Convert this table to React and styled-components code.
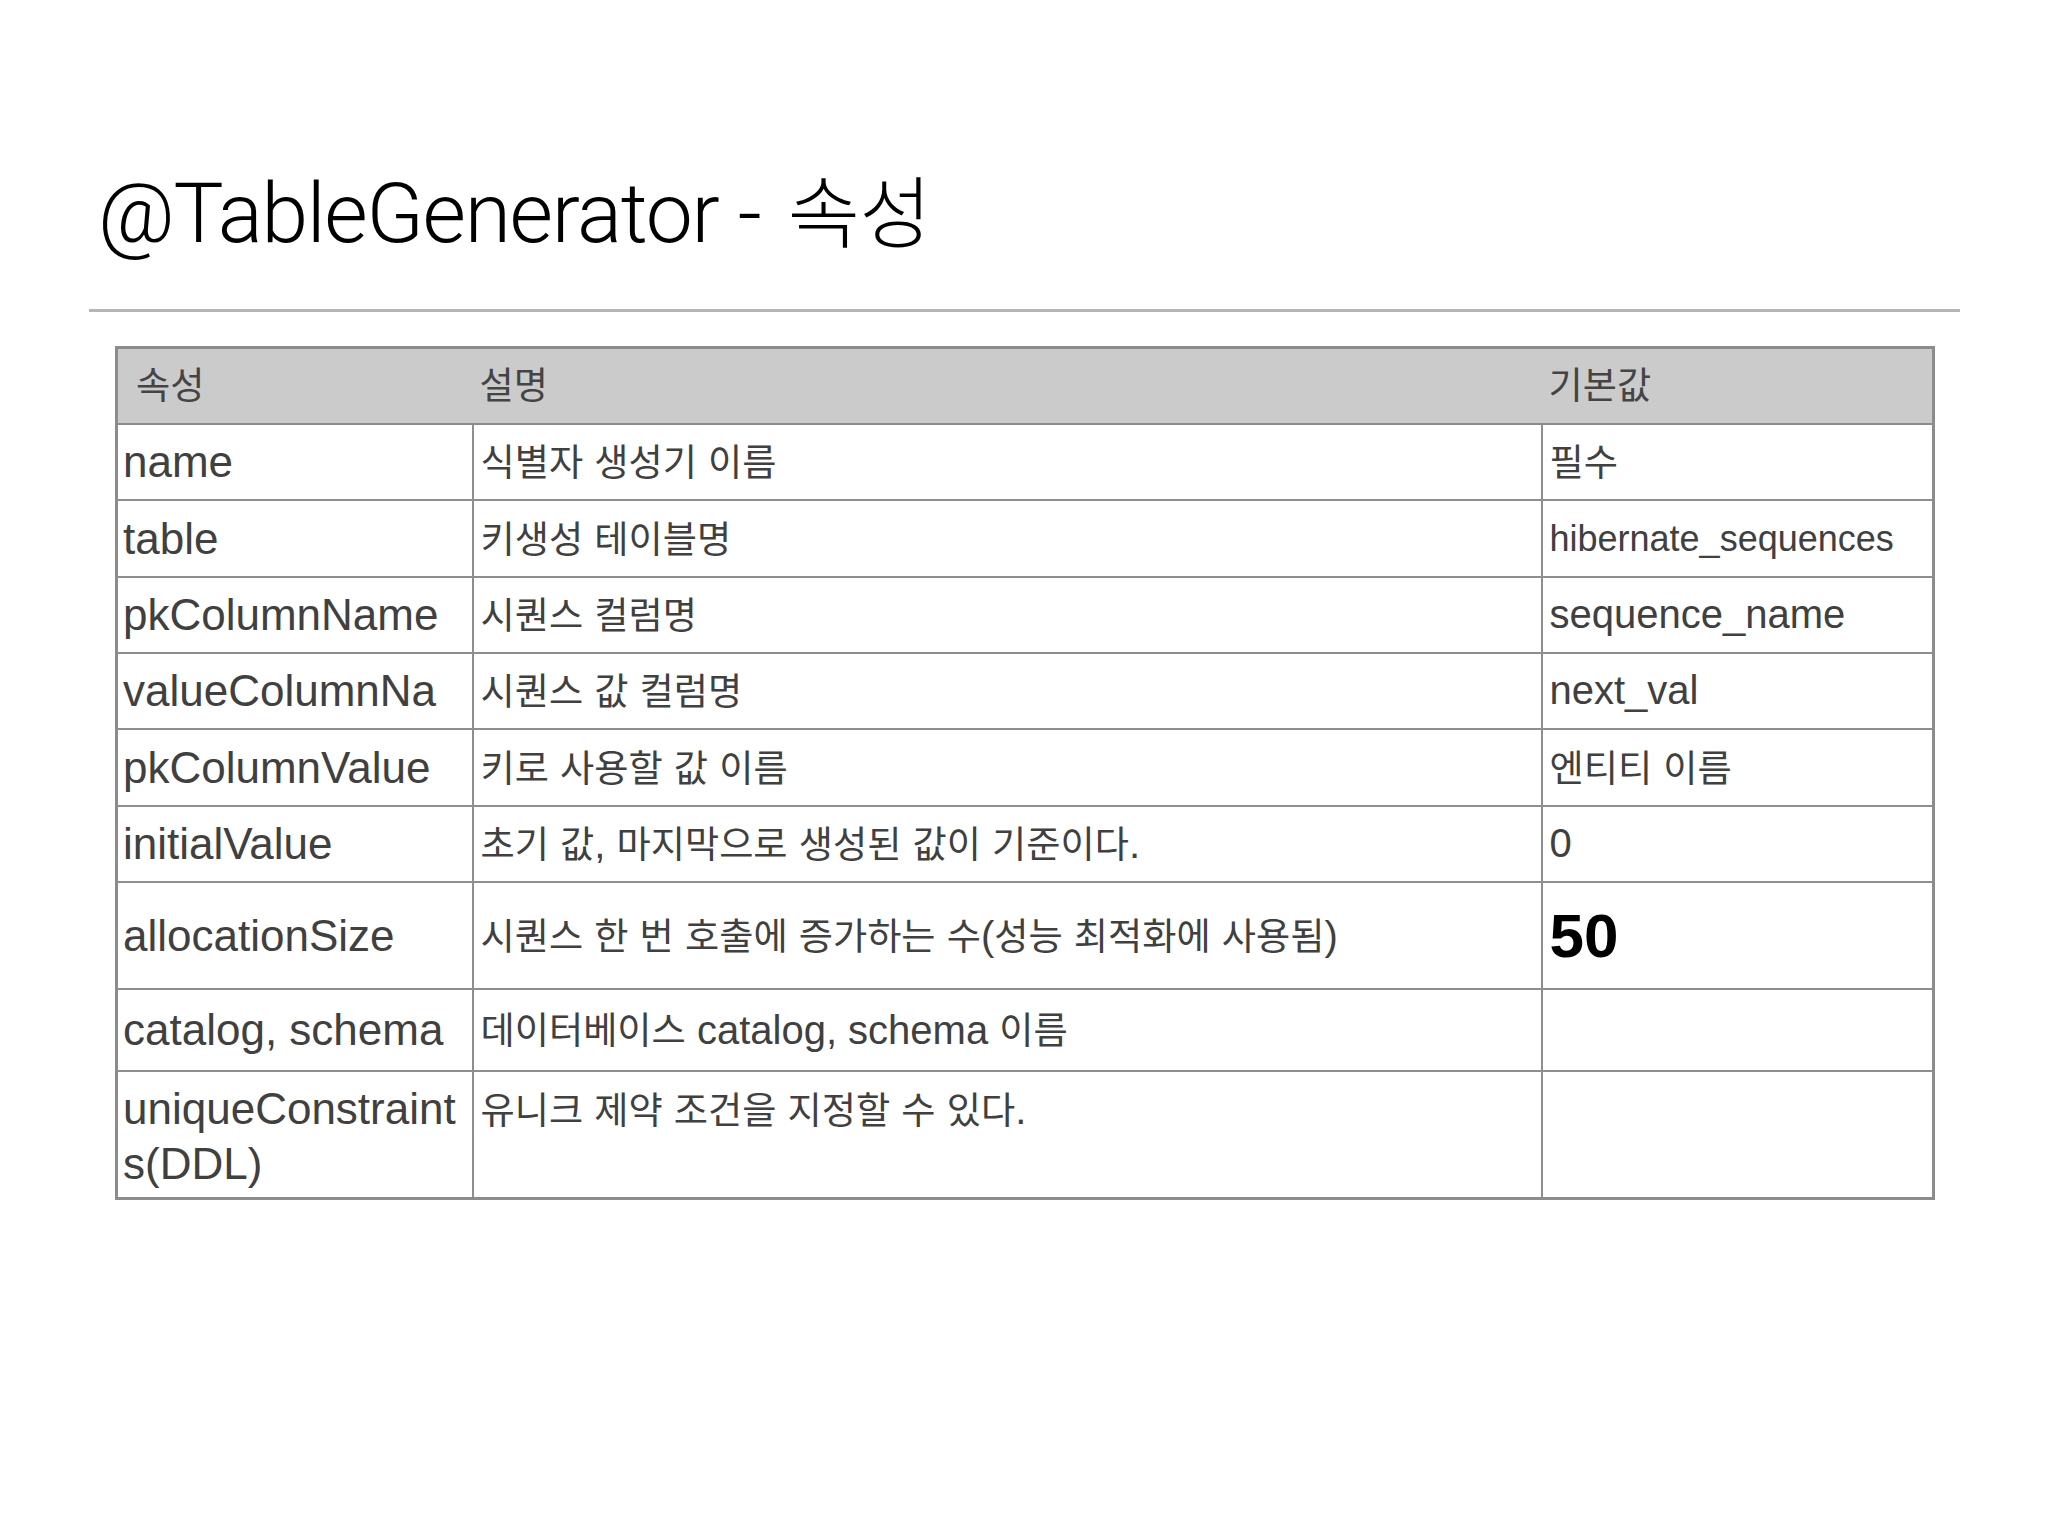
import React from "react";
import styled, { createGlobalStyle } from "styled-components";

const GlobalStyle = createGlobalStyle`
  body {
    margin: 0;
    background: #ffffff;
  }
`;

const Slide = styled.div`
  width: 2048px;
  min-height: 1536px;
  padding-top: 158px;
  box-sizing: border-box;
  background: #ffffff;
`;

const Title = styled.h1`
  margin: 0 0 0 98px;
  font-family: "Roboto", "Liberation Sans", sans-serif;
  font-weight: 300;
  font-size: 84px;
  line-height: 100px;
  color: #000000;
  letter-spacing: -1.3px;
`;

const Ko = styled.span`
  font-family: "Noto Sans CJK KR", sans-serif;
  font-size: ${(p) => p.$size || "0.93em"};
  font-weight: ${(p) => (p.$light ? 300 : 400)};
  margin-left: ${(p) => p.$gap || 0}px;
  letter-spacing: 0;
`;

const Rule = styled.hr`
  margin: 45px 0 0 89px;
  width: 1871px;
  height: 3px;
  border: none;
  background: #b5b5b5;
`;

const Table = styled.table`
  margin: 34px 0 0 115px;
  width: 1817px;
  table-layout: fixed;
  border-collapse: collapse;
  border: 3px solid #8c8c8c;
  font-family: "Liberation Sans", "Noto Sans CJK KR", sans-serif;
  color: #404040;
  line-height: 55px;
`;

const Row = styled.tr`
  height: ${(p) => p.$h}px;
  vertical-align: ${(p) => (p.$top ? "top" : "middle")};
`;

const HeadCell = styled.th`
  background: #cbcbcb;
  border-top: 3px solid #8c8c8c;
  border-bottom: 2px solid #8c8c8c;
  padding: 0 0 3px ${(p) => p.$pad || 7}px;
  text-align: left;
  font-weight: 400;
  font-size: 40px;
  color: #444444;
`;

const Cell = styled.td`
  border: 2px solid #8e8e8e;
  padding: ${(p) => (p.$top ? "9px" : "0")} 6px 0 ${(p) => p.$pad || 7}px;
  font-size: ${(p) => p.$size || 40}px;
  font-weight: ${(p) => (p.$bold ? 700 : 400)};
  color: ${(p) => (p.$bold ? "#000000" : "#404040")};
  white-space: nowrap;
  overflow: hidden;
`;

const rows = [
  { name: "name", desc: "식별자 생성기 이름", def: "필수", h: 76 },
  { name: "table", desc: "키생성 테이블명", def: "hibernate_sequences", defSize: 36, h: 77 },
  { name: "pkColumnName", desc: "시퀀스 컬럼명", def: "sequence_name", h: 76 },
  { name: "valueColumnNa", desc: "시퀀스 값 컬럼명", def: "next_val", h: 76 },
  { name: "pkColumnValue", desc: "키로 사용할 값 이름", def: "엔티티 이름", h: 77 },
  { name: "initialValue", desc: "초기 값, 마지막으로 생성된 값이 기준이다.", def: "0", h: 76 },
  { name: "allocationSize", desc: "시퀀스 한 번 호출에 증가하는 수(성능 최적화에 사용됨)", def: "50", defSize: 62, bold: true, h: 107 },
  { name: "catalog, schema", desc: "데이터베이스 catalog, schema 이름", def: "", h: 82 },
  { name: ["uniqueConstraint", "s(DDL)"], desc: "유니크 제약 조건을 지정할 수 있다.", def: "", h: 128, top: true },
];

function mixed(text) {
  return text.split(/([가-힣]+)/).map((part, i) =>
    /[가-힣]/.test(part) ? <Ko key={i}>{part}</Ko> : part
  );
}

export default function App() {
  return (
    <Slide>
      <GlobalStyle />
      <Title>
        @TableGenerator - <Ko $size="0.93em" $gap={8} $light>속성</Ko>
      </Title>
      <Rule />
      <Table>
        <colgroup>
          <col style={{ width: 356 }} />
          <col style={{ width: 1069 }} />
          <col style={{ width: 392 }} />
        </colgroup>
        <thead>
          <Row $h={76}>
            <HeadCell $pad={18}>{mixed("속성")}</HeadCell>
            <HeadCell $pad={7}>{mixed("설명")}</HeadCell>
            <HeadCell $pad={7}>{mixed("기본값")}</HeadCell>
          </Row>
        </thead>
        <tbody>
          {rows.map((r, i) => (
            <Row key={i} $h={r.h} $top={r.top}>
              <Cell $size={44} $pad={5} $top={r.top}>
                {Array.isArray(r.name) ? (
                  <>
                    {r.name[0]}
                    <br />
                    {r.name[1]}
                  </>
                ) : (
                  r.name
                )}
              </Cell>
              <Cell $top={r.top}>{mixed(r.desc)}</Cell>
              <Cell $top={r.top} $size={r.defSize} $bold={r.bold}>
                {mixed(r.def)}
              </Cell>
            </Row>
          ))}
        </tbody>
      </Table>
    </Slide>
  );
}
